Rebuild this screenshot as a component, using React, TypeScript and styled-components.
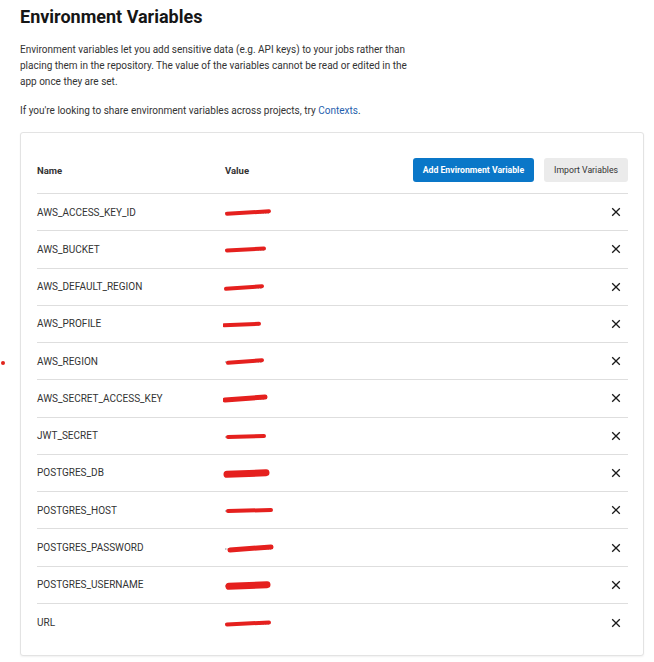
import { FC } from "react";
import styled, { createGlobalStyle } from "styled-components";

const GlobalStyle = createGlobalStyle`
  html, body {
    margin: 0;
    padding: 0;
    background: #ffffff;
  }
  body {
    font-family: Roboto, "Liberation Sans", Arial, sans-serif;
    color: #333333;
  }
`;

const Page = styled.main`
  position: relative;
  padding: 5px 10px 6px 20px;
`;

const Title = styled.h1`
  margin: 0;
  font-size: 18px;
  line-height: 24px;
  font-weight: 700;
  color: #161616;
`;

const Intro = styled.p`
  margin: 13px 0 0 0;
  width: 400px;
  font-size: 10px;
  line-height: 16px;
  color: #333333;
`;

const Hint = styled(Intro)`
  margin-top: 13px;
`;

const Link = styled.a`
  color: #1f5fae;
  text-decoration: none;
`;

const Card = styled.section`
  margin-top: 13px;
  padding: 25px 15px 14px 16px;
  background: #ffffff;
  border: 1px solid #e3e3e3;
  border-radius: 3px;
  box-shadow: 0 1px 2px rgba(0, 0, 0, 0.06);
`;

const HeaderRow = styled.div`
  display: flex;
  align-items: center;
  padding-bottom: 11px;
  border-bottom: 1px solid #dedede;
`;

const HeadCell = styled.div<{ $width?: number }>`
  width: ${(p) => (p.$width ? `${p.$width}px` : "auto")};
  flex: ${(p) => (p.$width ? "none" : "1")};
  font-size: 9.5px;
  font-weight: 700;
  color: #333333;
`;

const Buttons = styled.div`
  display: flex;
  gap: 10px;
`;

const Button = styled.button<{ $primary?: boolean }>`
  height: 24px;
  padding: 0 10px;
  border: none;
  border-radius: 3px;
  font-family: Roboto, "Liberation Sans", Arial, sans-serif;
  font-size: 8.7px;
  font-weight: ${(p) => (p.$primary ? 700 : 400)};
  color: ${(p) => (p.$primary ? "#ffffff" : "#333333")};
  background: ${(p) => (p.$primary ? "#0a77c8" : "#ebebeb")};
  cursor: pointer;
`;

const Row = styled.div<{ $last?: boolean }>`
  display: flex;
  align-items: center;
  height: 37.27px;
  box-sizing: border-box;
  border-bottom: ${(p) => (p.$last ? "none" : "1px solid #dedede")};
`;

const NameCell = styled.div`
  width: 188px;
  font-size: 10px;
  color: #333333;
`;

const ValueCell = styled.div`
  flex: 1;
  display: flex;
  align-items: center;
  margin-left: -2px;
`;

const RemoveButton = styled.button`
  display: flex;
  align-items: center;
  justify-content: center;
  width: 20px;
  height: 20px;
  margin-right: 2px;
  padding: 0;
  border: none;
  background: transparent;
  cursor: pointer;
`;

const Dot = styled.span`
  position: absolute;
  left: 1px;
  top: 361px;
  width: 4px;
  height: 4px;
  border-radius: 50%;
  background: #e0241c;
`;

type Variable = { name: string; from: number; to: number; tilt: number; thick: number };

const variables: Variable[] = [
  { name: "AWS_ACCESS_KEY_ID", from: 0, to: 44, tilt: -1.5, thick: 4 },
  { name: "AWS_BUCKET", from: 0, to: 39, tilt: -1, thick: 4 },
  { name: "AWS_DEFAULT_REGION", from: -1, to: 37, tilt: -1.5, thick: 4 },
  { name: "AWS_PROFILE", from: -3, to: 34, tilt: -0.5, thick: 4 },
  { name: "AWS_REGION", from: 1, to: 37, tilt: -1.5, thick: 4 },
  { name: "AWS_SECRET_ACCESS_KEY", from: -2, to: 40, tilt: -2, thick: 5 },
  { name: "JWT_SECRET", from: 1, to: 39, tilt: 0, thick: 4 },
  { name: "POSTGRES_DB", from: 0, to: 41, tilt: -0.5, thick: 7 },
  { name: "POSTGRES_HOST", from: 1, to: 46, tilt: 0, thick: 4 },
  { name: "POSTGRES_PASSWORD", from: 3, to: 46, tilt: -2, thick: 5 },
  { name: "POSTGRES_USERNAME", from: 2, to: 42, tilt: -0.5, thick: 7 },
  { name: "URL", from: 0, to: 44, tilt: -1, thick: 4 },
];

const Scribble: FC<{ v: Variable }> = ({ v }) => {
  const x1 = v.from + 4;
  const x2 = v.to + 2;
  const mid = (x1 + x2) / 2;
  return (
    <svg width="56" height="14" viewBox="0 0 56 14">
      <path d={`M2 8 H${x2}`} stroke="#8a8a8a" strokeWidth="1" strokeDasharray="1.5 1" />
      <path
        d={`M${x1} ${8 - v.tilt / 2} Q${mid} ${7.5} ${x2} ${7 + v.tilt / 2}`}
        stroke="#e5201e"
        strokeWidth={v.thick}
        strokeLinecap="round"
        fill="none"
      />
    </svg>
  );
};

const CloseIcon: FC = () => (
  <svg width="10" height="10" viewBox="0 0 10 10">
    <path d="M1.2 1.2 L8.8 8.8 M8.8 1.2 L1.2 8.8" stroke="#1a1a1a" strokeWidth="1.3" />
  </svg>
);

const App: FC = () => {
  return (
    <Page>
      <GlobalStyle />
      <Dot />
      <Title>Environment Variables</Title>
      <Intro>
        Environment variables let you add sensitive data (e.g. API keys) to your jobs rather than
        placing them in the repository. The value of the variables cannot be read or edited in the
        app once they are set.
      </Intro>
      <Hint>
        If you're looking to share environment variables across projects, try{" "}
        <Link href="#">Contexts</Link>.
      </Hint>
      <Card>
        <HeaderRow>
          <HeadCell $width={188}>Name</HeadCell>
          <HeadCell>Value</HeadCell>
          <Buttons>
            <Button $primary>Add Environment Variable</Button>
            <Button>Import Variables</Button>
          </Buttons>
        </HeaderRow>
        {variables.map((v, i) => (
          <Row key={v.name} $last={i === variables.length - 1}>
            <NameCell>{v.name}</NameCell>
            <ValueCell>
              <Scribble v={v} />
            </ValueCell>
            <RemoveButton aria-label={`Remove ${v.name}`}>
              <CloseIcon />
            </RemoveButton>
          </Row>
        ))}
      </Card>
    </Page>
  );
};

export default App;
